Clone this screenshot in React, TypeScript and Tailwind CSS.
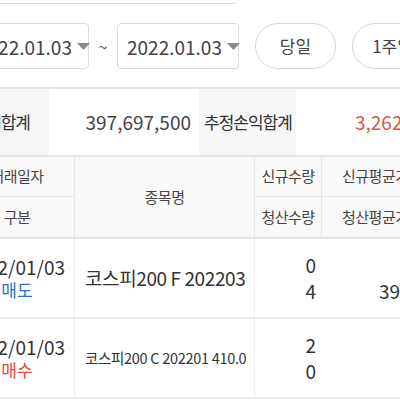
import React from "react"

const font = { fontFamily: '"Noto Sans CJK KR", "Noto Sans", sans-serif' }

const Caret = () => (
    <svg width="13" height="7" viewBox="0 0 13 7" className="shrink-0">
        <path d="M0 0 L13 0 L6.5 7 Z" fill="#8a8a8a" />
    </svg>
)

const DateBox = ({ value, className }: { value: string; className?: string }) => (
    <div className={`flex items-center gap-[5px] h-[46px] w-[122px] pl-[9px] border border-[#dcdcdc] rounded-[4px] ${className ?? ""}`}>
        <span className="text-[19px] text-[#444] leading-none">{value}</span>
        <Caret />
    </div>
)

const Pill = ({ label, className }: { label: string; className?: string }) => (
    <div className={`flex items-center justify-center h-[46px] w-[81px] shrink-0 rounded-full border border-[#d6d6d6] text-[17px] text-[#444] ${className ?? ""}`}>
        {label}
    </div>
)

const rows = [
    { side: "매도", color: "text-[#2f6fc4]", name: "코스피200 F 202203", small: false, q1: "0", q2: "4", p1: "0.00", p2: "397.50" },
    { side: "매수", color: "text-[#e0493a]", name: "코스피200 C 202201 410.0", small: true, q1: "2", q2: "0", p1: "0.86", p2: "0.00" },
]

export default function App() {
    return (
        <div className="w-[400px] h-[400px] overflow-hidden bg-white text-[#333]" style={font}>
            <div className="w-[520px] -ml-[40px]">
                {/* search box edge */}
                <div className="h-[20px] -mt-[16px] w-[280px] border border-[#dedede] rounded-[7px]" />

                {/* date range */}
                <div className="flex items-center mt-[19px] h-[46px]">
                    <DateBox value="2022.01.03" className="ml-[7px] shrink-0" />
                    <span className="w-[28px] text-center text-[16px] text-[#555]">~</span>
                    <DateBox value="2022.01.03" className="shrink-0" />
                    <Pill label="당일" className="ml-[16px]" />
                    <Pill label="1주일" className="ml-[16px]" />
                </div>

                {/* summary */}
                <div className="mt-[18px] flex h-[70px] border-t-2 border-b-2 border-[#e6e6e6]">
                    <div className="w-[89px] bg-[#f6f6f6] flex items-center justify-end pr-[19px] text-[17px] tracking-[-1px]">
                        매매합계
                    </div>
                    <div className="w-[150px] flex items-center justify-end pr-[8px] text-[19px] text-[#444]">
                        397,697,500
                    </div>
                    <div className="w-[97px] bg-[#f6f6f6] flex items-center pl-[5px] text-[17px] tracking-[-1px]">
                        추정손익합계
                    </div>
                    <div className="w-[160px] flex items-center pl-[59px] text-[19px] text-[#d9584a]">
                        3,262,500
                    </div>
                </div>

                {/* table header */}
                <div className="grid grid-cols-[115px_180px_67px_140px] border-b-2 border-[#e6e6e6] text-[15px] tracking-[-0.5px] text-[#444]">
                    <div className="flex flex-col border-r border-[#e6e6e6] bg-[#f9f9f9]">
                        <div className="h-[40px] flex items-center justify-center border-b border-[#e6e6e6]">거래일자</div>
                        <div className="h-[40px] flex items-center justify-center">구분</div>
                    </div>
                    <div className="flex items-center justify-center border-r border-[#e6e6e6] bg-[#f9f9f9]">종목명</div>
                    <div className="flex flex-col border-r border-[#e6e6e6] bg-[#f9f9f9]">
                        <div className="h-[40px] flex items-center justify-center border-b border-[#e6e6e6]">신규수량</div>
                        <div className="h-[40px] flex items-center justify-center">청산수량</div>
                    </div>
                    <div className="flex flex-col bg-[#f9f9f9]">
                        <div className="h-[40px] flex items-center pl-[20px] border-b border-[#e6e6e6]">신규평균가</div>
                        <div className="h-[40px] flex items-center pl-[20px]">청산평균가</div>
                    </div>
                </div>

                {/* rows */}
                {rows.map((r, i) => (
                    <div key={i} className="grid grid-cols-[115px_180px_67px_140px] h-[80px] border-b-2 border-[#ececec]">
                        <div className="flex flex-col items-center justify-center border-r border-[#ececec] leading-[23px]">
                            <span className="text-[19px] text-[#333] -ml-[3px]">2022/01/03</span>
                            <span className={`text-[17px] ${r.color}`}>{r.side}</span>
                        </div>
                        <div className={`flex items-center pl-[10px] border-r border-[#ececec] ${r.small ? "text-[14.5px] tracking-[-0.3px]" : "text-[19px] tracking-[-0.4px]"}`}>
                            {r.name}
                        </div>
                        <div className="flex flex-col items-end justify-center pr-[6px] text-[19px] leading-[26px]">
                            <span>{r.q1}</span>
                            <span>{r.q2}</span>
                        </div>
                        <div className="flex flex-col items-end justify-center pr-[25px] text-[19px] leading-[26px]">
                            <span>{r.p1}</span>
                            <span>{r.p2}</span>
                        </div>
                    </div>
                ))}
            </div>
        </div>
    )
}
